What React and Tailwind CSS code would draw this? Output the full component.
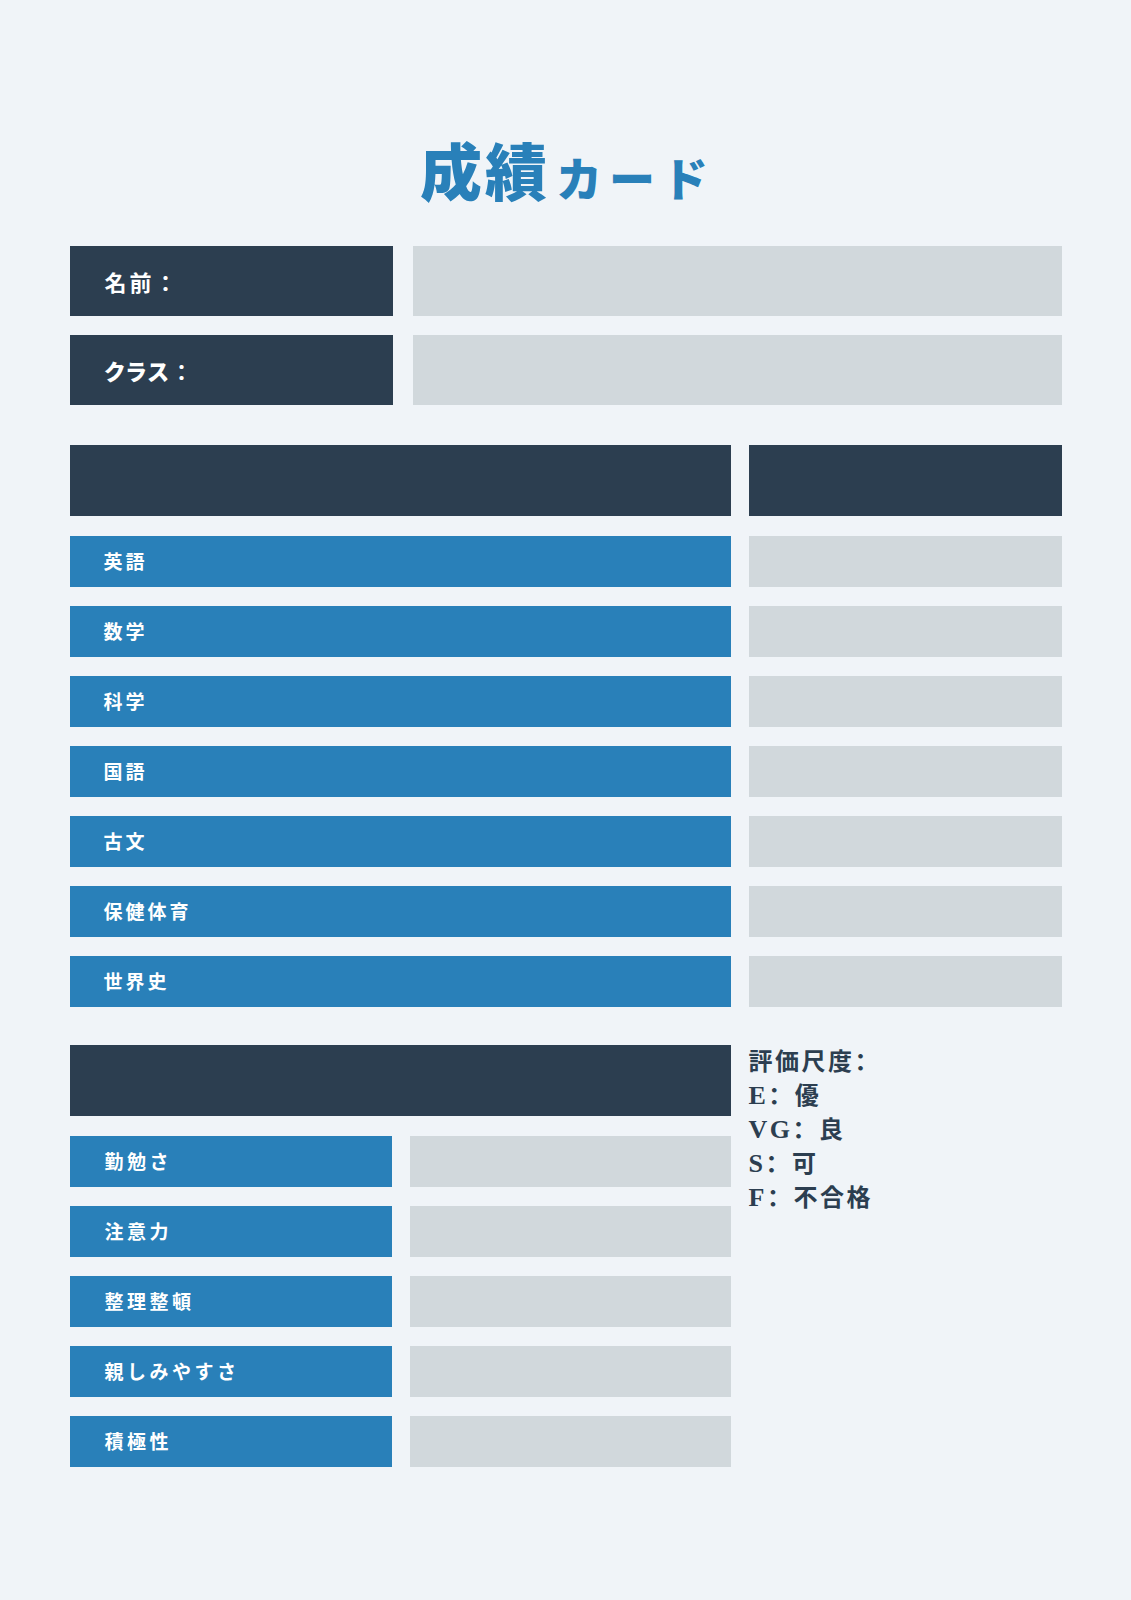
export default function App() {
  const subjects = ["英語", "数学", "科学", "国語", "古文", "保健体育", "世界史"];
  const traits = ["勤勉さ", "注意力", "整理整頓", "親しみやすさ", "積極性"];
  const sc = { fontFamily: '"Noto Sans CJK SC", "Noto Sans CJK JP", sans-serif' };
  const legend = [
    ["E", "優"],
    ["VG", "良"],
    ["S", "可"],
    ["F", "不合格"],
  ];
  return (
    <div className="min-h-[1600px] bg-[#f0f4f8] font-['Noto_Sans_CJK_JP',sans-serif]">
      <div className="w-[992px] mx-auto pt-[138px] pb-[130px]">
        <h1 className="flex items-baseline justify-center text-[#2980b9] font-black leading-none h-[60px] mb-[48px] pl-[4px]">
          <span className="text-[62px] leading-none tracking-[3px]">成績</span>
          <span className="text-[46px] leading-none tracking-[7px] ml-[6px]">カード</span>
        </h1>

        <div className="flex flex-col gap-[19px]">
          <div className="flex gap-[20px]">
            <div className="w-[323px] h-[70px] bg-[#2c3e50] flex items-center pl-[35px] text-white text-[22px] font-bold tracking-[3px]">名前：</div>
            <div className="flex-1 h-[70px] bg-[#d1d8dc]"></div>
          </div>
          <div className="flex gap-[20px]">
            <div className="w-[323px] h-[70px] bg-[#2c3e50] flex items-center pl-[35px] text-white text-[22px] font-black tracking-[3px]">
              <span className="[font-feature-settings:'palt'] tracking-[2px]">クラス</span>
              <span className="font-bold">：</span>
            </div>
            <div className="flex-1 h-[70px] bg-[#d1d8dc]"></div>
          </div>
        </div>

        <div className="flex gap-[18px] mt-[40px]">
          <div className="w-[661px] flex flex-col">
            <div className="h-[71px] bg-[#2c3e50] mb-[20px]"></div>
            <div className="flex flex-col gap-[19px]">
              {subjects.map((s) => (
                <div key={s} className="h-[51px] bg-[#2980b9] flex items-center pl-[34px] text-white text-[19px] font-bold tracking-[3px]">{s}</div>
              ))}
            </div>
          </div>
          <div className="flex-1 flex flex-col">
            <div className="h-[71px] bg-[#2c3e50] mb-[20px]"></div>
            <div className="flex flex-col gap-[19px]">
              {subjects.map((s) => (
                <div key={s} className="h-[51px] bg-[#d1d8dc]"></div>
              ))}
            </div>
          </div>
        </div>

        <div className="flex gap-[18px] mt-[38px]">
          <div className="w-[661px] flex flex-col">
            <div className="h-[71px] bg-[#2c3e50] mb-[20px]"></div>
            <div className="flex flex-col gap-[19px]">
              {traits.map((t) => (
                <div key={t} className="flex gap-[18px]">
                  <div className="w-[322px] h-[51px] bg-[#2980b9] flex items-center pl-[35px] text-white text-[19px] font-bold tracking-[3.5px]">{t}</div>
                  <div className="flex-1 h-[51px] bg-[#d1d8dc]"></div>
                </div>
              ))}
            </div>
          </div>
          <div className="flex-1 -mt-[2px] text-[#2c3e50] text-[24px] font-bold tracking-[2.5px]">
            <div className="h-[34px] leading-[34px] whitespace-nowrap">評価尺度<span style={sc}>：</span></div>
            {legend.map(([k, v]) => (
              <div key={k} className="h-[34px] leading-[34px] whitespace-nowrap">
                <span className="font-['Liberation_Serif',serif] text-[26px]">{k}</span>
                <span style={sc}>：</span>
                <span>{v}</span>
              </div>
            ))}
          </div>
        </div>
      </div>
    </div>
  );
}
